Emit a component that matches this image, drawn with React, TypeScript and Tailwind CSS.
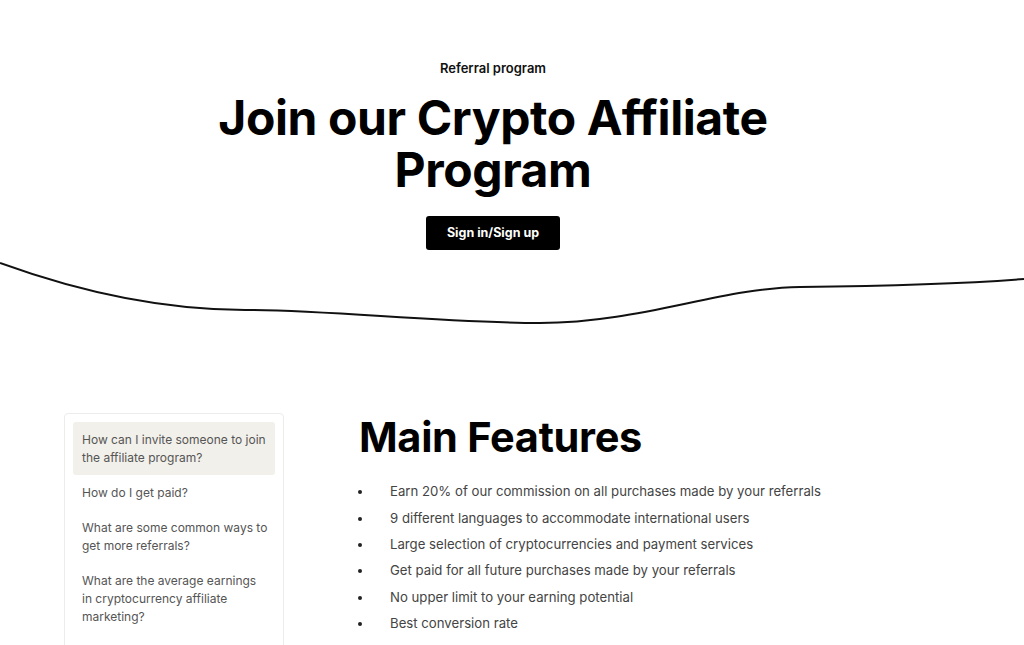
import React from "react";

const faqs: string[][] = [
  ["How can I invite someone to join", "the affiliate program?"],
  ["How do I get paid?"],
  ["What are some common ways to", "get more referrals?"],
  ["What are the average earnings", "in cryptocurrency affiliate", "marketing?"],
];

const features = [
  "Earn 20% of our commission on all purchases made by your referrals",
  "9 different languages to accommodate international users",
  "Large selection of cryptocurrencies and payment services",
  "Get paid for all future purchases made by your referrals",
  "No upper limit to your earning potential",
  "Best conversion rate",
];

export default function App() {
  return (
    <div className="w-[1024px] h-[645px] overflow-hidden bg-white text-black" style={{ fontFamily: "Inter, 'Noto Sans', sans-serif" }}>
      <section className="w-[986px] flex flex-col items-center pt-[60px] text-center">
        <p className="text-[13px] leading-[16px] font-semibold text-[#111]">Referral program</p>
        <h1 className="mt-[16px] text-[48px] leading-[52px] font-bold tracking-[-0.4px] text-black">
          Join our Crypto Affiliate
          <br />
          Program
        </h1>
        <button className="mt-[20px] w-[134px] h-[34px] bg-black rounded-[3px] text-white text-[12.5px] font-bold">
          Sign in/Sign up
        </button>
      </section>

      <svg className="block" width="1024" height="80" viewBox="0 250 1024 80" fill="none">
        <path
          d="M0,263 C80,292 160,310 245,310 C330,310 440,323 540,323 C640,323 720,288 800,287 C880,286 960,284 1024,279"
          stroke="#111"
          strokeWidth="2"
        />
      </svg>

      <section className="flex pl-[64px] pt-[83px]">
        <div className="w-[220px] h-[260px] shrink-0 border border-[#ececec] rounded-[4px] p-[8px]">
          {faqs.map((lines, i) => (
            <div
              key={i}
              className={`pl-[9px] pr-[4px] pt-[9px] pb-[8px] rounded-[3px] text-[12px] leading-[18px] text-[#555] whitespace-nowrap ${i === 0 ? "bg-[#f2f0ea]" : ""}`}
            >
              {lines.map((l, j) => (
                <div key={j}>{l}</div>
              ))}
            </div>
          ))}
        </div>
        <div className="ml-[75px]">
          <h2 className="text-[41.5px] leading-[48px] font-bold tracking-[-0.3px] text-black">Main Features</h2>
          <ul className="mt-[18px]">
            {features.map((f, i) => (
              <li key={i} className="flex items-center h-[26.4px] text-[13.2px] text-[#444]">
                <span className="w-[31px] shrink-0 flex">
                  <span className="ml-[-1px] w-[4px] h-[4px] rounded-full bg-[#222]" />
                </span>
                {f}
              </li>
            ))}
          </ul>
        </div>
      </section>
    </div>
  );
}
